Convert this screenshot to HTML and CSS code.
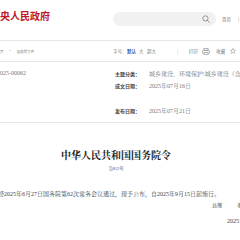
FILE: index.html
```html
<!DOCTYPE html>
<html lang="zh-CN">
<head>
<meta charset="utf-8">
<title>中华人民共和国国务院令</title>
<link rel="stylesheet" href="styles.css">
</head>
<body>
<header class="top">
  <div class="logo">中央人民政府</div>
  <div class="search">
    <svg class="search-ic" viewBox="0 0 8 8" width="8" height="8"><circle cx="3.4" cy="3.4" r="2.6" fill="none" stroke="#8a8a8a" stroke-width="0.9"/><path d="M5.3 5.3 L7.4 7.4" stroke="#8a8a8a" stroke-width="0.9" stroke-linecap="round"/></svg>
  </div>
  <div class="toplinks"><span>首页</span><span class="sep">|</span></div>
</header>
<div class="bar">
  <div class="crumb"><span>首页</span><span class="gt">&gt;</span><span>国务院文件</span></div>
  <div class="tools">
    <span class="t-lbl">字号：</span><span class="on">默认</span><span class="t-big">大</span><span class="t-huge">超大</span><span class="vsep">|</span><span class="t-print">打印</span>
    <svg class="print" viewBox="0 0 8 7" width="8" height="7"><rect x="2" y="0.5" width="4" height="1.8" fill="none" stroke="#8a8a8a" stroke-width="0.6"/><rect x="0.5" y="2.3" width="7" height="3" rx="0.6" fill="none" stroke="#8a8a8a" stroke-width="0.6"/><rect x="2" y="4.3" width="4" height="2.2" fill="#fff" stroke="#8a8a8a" stroke-width="0.6"/></svg>
    <span class="t-fav">收藏</span>
    <svg class="star" viewBox="0 0 6 6" width="6" height="6"><path d="M3 0.4 L3.75 2.2 L5.6 2.3 L4.15 3.45 L4.65 5.4 L3 4.3 L1.35 5.4 L1.85 3.45 L0.4 2.3 L2.25 2.2 Z" fill="none" stroke="#8a8a8a" stroke-width="0.5" stroke-linejoin="round"/></svg>
  </div>
</div>
<section class="info">
  <div class="cell"><span class="val idx">2025-00062</span></div>
  <div class="cell right"><span class="lbl">主题分类：</span><span class="val">城乡建设、环境保护\城乡建设（含住房）</span></div>
  <div class="cell"></div>
  <div class="cell right"><span class="lbl">成文日期：</span><span class="val">2025年07月16日</span></div>
  <div class="cell full"></div>
  <div class="cell"></div>
  <div class="cell right"><span class="lbl">发布日期：</span><span class="val">2025年07月21日</span></div>
</section>
<article class="doc">
  <h1 class="title">中华人民共和国国务院令</h1>
  <p class="num">第812号</p>
  <p class="body">《住房租赁条例》已经2025年6月27日国务院第62次常务会议通过，现予公布，自2025年9月15日起施行。</p>
  <p class="sign"><span>总理</span><span class="name">李强</span></p>
  <p class="date">2025年7月16日</p>
</article>
</body>
</html>
```

FILE: styles.css
```css
* { box-sizing: border-box; }
html, body { margin: 0; padding: 0; }
body {
  width: 240px;
  height: 240px;
  overflow: hidden;
  background: #fff;
  color: #333;
  font-family: "Liberation Serif", "Noto Serif CJK SC", "Noto Sans CJK SC", serif;
}

/* header */
.top {
  height: 41px;
  display: flex;
  align-items: flex-start;
  border-bottom: 1px solid #e6e6e6;
  white-space: nowrap;
}
.logo {
  margin: 10px 0 0 -10px;
  font-family: "Noto Sans CJK SC", sans-serif;
  font-weight: 700;
  font-size: 10px;
  line-height: 11px;
  color: #c2171f;
  width: 60px;
  flex: none;
}
.search {
  margin: 12px 0 0 63px;
  width: 103px;
  height: 14px;
  flex: none;
  border-radius: 7px;
  background: #f1f1f1;
  display: flex;
  align-items: center;
  justify-content: flex-end;
  padding-right: 6px;
}
.search-ic { display: block; }
.toplinks {
  margin: 17px 0 0 6px;
  display: flex;
  gap: 7px;
  font-family: "Noto Sans CJK SC", sans-serif;
  font-size: 4.5px;
  line-height: 4px;
  color: #777;
}
.toplinks .sep { color: #999; }

/* breadcrumb + tools */
.bar {
  height: 21px;
  display: flex;
  align-items: center;
  border-bottom: 1px solid #e6e6e6;
  white-space: nowrap;
  font-family: "Noto Sans CJK SC", sans-serif;
  color: #777;
}
.crumb {
  margin-left: -3.5px;
  width: 116.5px;
  flex: none;
  display: flex;
  align-items: center;
  font-size: 3.5px;
}
.crumb .gt { margin: 0 6px 0 5.5px; font-size: 3px; }
.tools {
  display: flex;
  align-items: center;
  font-size: 4.5px;
}
.tools .on { color: #1d5cae; font-weight: 700; margin-left: 0.5px; }
.tools .t-big { margin-left: 3px; }
.tools .t-huge { margin-left: 3.5px; }
.tools .vsep { margin-left: 21px; color: #bbb; }
.tools .t-print { margin-left: 10.5px; }
.tools .print { margin-left: 4.5px; display: block; }
.tools .t-fav { margin-left: 6px; }
.tools .star { margin-left: 5px; display: block; }

/* info table */
.info {
  display: grid;
  grid-template-columns: 115px 125px;
  grid-auto-rows: 12.5px;
  padding: 5px 0;
  border-bottom: 1px solid #e6e6e6;
  white-space: nowrap;
}
.cell {
  display: flex;
  align-items: center;
  overflow: visible;
}
.cell.full { grid-column: 1 / span 2; }
.lbl {
  width: 34px;
  flex: none;
  font-family: "Noto Sans CJK SC", sans-serif;
  font-weight: 700;
  font-size: 5px;
  color: #444;
}
.val {
  font-size: 6px;
  color: #777;
}
.idx { margin-left: -3px; }

/* document */
.doc {
  padding-right: 8px;
  white-space: nowrap;
}
.title {
  margin: 27px 0 0;
  text-align: center;
  font-size: 10px;
  line-height: 12px;
  font-weight: 700;
  color: #222;
}
.num {
  margin: 4px 0 0;
  text-align: center;
  font-size: 4.2px;
  line-height: 6px;
  color: #444;
}
.body {
  margin: 18px 0 0 -56px;
  font-size: 6px;
  line-height: 8px;
  color: #444;
}
.sign {
  margin: 5px 0 0 212px;
  font-size: 5px;
  line-height: 6px;
  color: #444;
}
.sign .name { margin-left: 15px; }
.date {
  margin: 9px 0 0 227px;
  font-size: 6px;
  line-height: 6px;
  color: #444;
}
```
